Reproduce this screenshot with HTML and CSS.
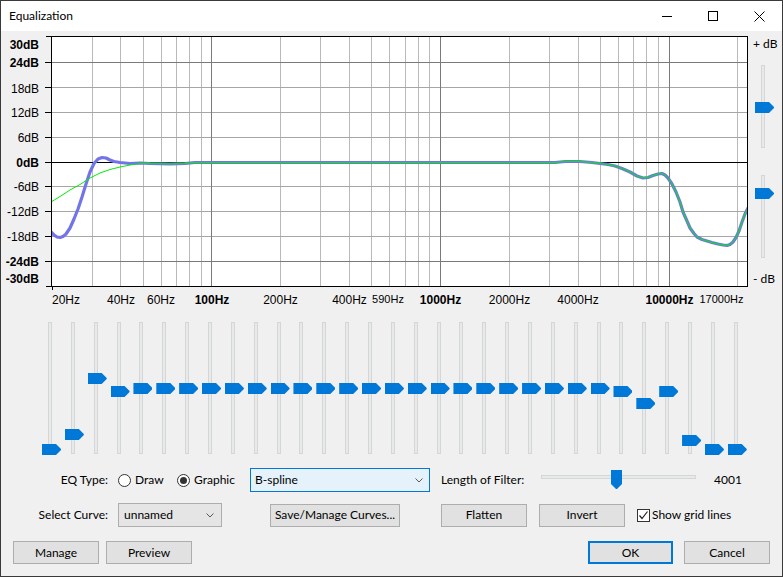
FILE: index.html
```html
<!DOCTYPE html>
<html>
<head>
<meta charset="utf-8">
<title>Equalization</title>
<link rel="stylesheet" href="styles.css">
</head>
<body>
<div class="window">
  <div class="titlebar">
    <span class="title">Equalization</span>
    <div class="caps">
      <span class="cap"><svg width="10" height="10" viewBox="0 0 10 10"><path d="M0 5.5H10" stroke="#000" stroke-width="1"/></svg></span>
      <span class="cap"><svg width="10" height="10" viewBox="0 0 10 10"><rect x="0.5" y="0.5" width="9" height="9" fill="none" stroke="#000" stroke-width="1"/></svg></span>
      <span class="cap"><svg width="11" height="11" viewBox="0 0 11 11"><path d="M0.5 0.5L10.5 10.5M10.5 0.5L0.5 10.5" stroke="#000" stroke-width="1"/></svg></span>
    </div>
  </div>

  <div class="graph-row">
    <svg class="graph" viewBox="1 31 748 282" width="748" height="282">
      <defs>
        <clipPath id="plot"><rect x="52" y="37" width="695" height="249"/></clipPath>
      </defs>
      <rect x="51.5" y="36.5" width="696" height="250" fill="#fff"/>
      <path stroke="#b9b9b9" stroke-width="1" fill="none" d="M92.5 37V286M120.5 37V286M143.5 37V286M161.5 37V286M176.5 37V286M189.5 37V286M201.5 37V286M280.5 37V286M320.5 37V286M349.5 37V286M371.5 37V286M389.5 37V286M405.5 37V286M418.5 37V286M429.5 37V286M509.5 37V286M549.5 37V286M578.5 37V286M600.5 37V286M618.5 37V286M633.5 37V286M646.5 37V286M658.5 37V286M737.5 37V286"/>
      <path stroke="#a6a6a6" stroke-width="1" fill="none" d="M52 87.5H747M52 112.5H747M52 137.5H747M52 186.5H747M52 211.5H747M52 236.5H747"/>
      <path stroke="#7a7a7a" stroke-width="1" fill="none" d="M211.5 37V286M440.5 37V286M669.5 37V286M52 62.5H747M52 261.5H747"/>
      <path stroke="#000" stroke-width="1" fill="none" d="M52 162.5H747"/>
      <rect x="51.5" y="36.5" width="696" height="250" fill="none" stroke="#000" stroke-width="1"/>
      <path stroke="#000" stroke-width="1" fill="none" d="M46 36.5H51M45 62.5H51M45 87.5H51M45 112.5H51M45 137.5H51M45 162.5H51M45 186.5H51M45 211.5H51M45 236.5H51M45 261.5H51M46 286.5H51M52.5 287V290"/>
      <g class="ylab">
        <text x="39" y="49.3" class="b">30dB</text>
        <text x="39" y="67.3" class="b">24dB</text>
        <text x="39" y="92.5">18dB</text>
        <text x="39" y="116.5">12dB</text>
        <text x="39" y="142">6dB</text>
        <text x="39" y="167" class="b">0dB</text>
        <text x="39" y="191">-6dB</text>
        <text x="39" y="216">-12dB</text>
        <text x="39" y="241">-18dB</text>
        <text x="39" y="265.5" class="b">-24dB</text>
        <text x="39" y="282.7" class="b">-30dB</text>
      </g>
      <g class="xlab">
        <text x="52" y="304" class="start">20Hz</text>
        <text x="121" y="304">40Hz</text>
        <text x="161" y="304">60Hz</text>
        <text x="212" y="304" class="b">100Hz</text>
        <text x="280.5" y="304">200Hz</text>
        <text x="349.5" y="304">400Hz</text>
        <text x="388" y="303" class="s">590Hz</text>
        <text x="440.5" y="304" class="b">1000Hz</text>
        <text x="509.5" y="304">2000Hz</text>
        <text x="578" y="304">4000Hz</text>
        <text x="669.5" y="304" class="b">10000Hz</text>
        <text x="721.5" y="303" class="s">17000Hz</text>
      </g>
      <g clip-path="url(#plot)" fill="none" stroke-linejoin="round" stroke-linecap="round">
        <polyline stroke="#7474ea" stroke-width="3.2" points="51,232 54,235 57,237 60,237.5 63,236.5 66,234 70,228 74,219 78,209 82,197 86,184 90,172 94,163.5 98,159 102,157.5 106,158 110,160 114,161.5 120,162.5 130,163.5 140,163 150,163.5 170,164 185,163.5 195,162.5 555,162.5 565,161.5 580,161.5 592,162.5 600,163.5 608,164.5 615,166 622,168.5 630,172 637,176 643,178 648,177.5 653,175.5 658,174 662,173.5 665,175 668,178 672,184 676,192 680,202 683,212 687,221 690,228 694,233.5 697,237 702,239.5 707,241 712,242.5 718,244 723,245 727,245.5 730,244.5 733,242 736,237.5 739,231 742,222 745,214 748,208"/>
        <polyline stroke="#00ee00" stroke-width="1" points="51,202 60,196.5 70,190 80,184.5 90,178 100,173 110,169.5 120,167 130,165 140,163.5 150,163.5 170,164 185,163.5 195,162.5 555,162.5 565,161.5 580,161.5 592,162.5 600,163.5 608,164.5 615,166 622,168.5 630,172 637,176 643,178 648,177.5 653,175.5 658,174 662,173.5 665,175 668,178 672,184 676,192 680,202 683,212 687,221 690,228 694,233.5 697,237 702,239.5 707,241 712,242.5 718,244 723,245 727,245.5 730,244.5 733,242 736,237.5 739,231 742,222 745,214 748,208"/>
      </g>
    </svg>
    <div class="gain">
      <span class="gain-label">+ dB</span>
      <div class="vtrack one"><span class="vthumb top1"></span></div>
      <div class="vtrack two"><span class="vthumb top2"></span></div>
      <span class="gain-label bottom">- dB</span>
    </div>
  </div>

  <div class="bands">
    <div class="band"><div class="track"></div><span class="thumb" style="top:122px"></span></div>
    <div class="band"><div class="track"></div><span class="thumb" style="top:107px"></span></div>
    <div class="band"><div class="track"></div><span class="thumb" style="top:51px"></span></div>
    <div class="band"><div class="track"></div><span class="thumb" style="top:64px"></span></div>
    <div class="band"><div class="track"></div><span class="thumb" style="top:61px"></span></div>
    <div class="band"><div class="track"></div><span class="thumb" style="top:61px"></span></div>
    <div class="band"><div class="track"></div><span class="thumb" style="top:61px"></span></div>
    <div class="band"><div class="track"></div><span class="thumb" style="top:61px"></span></div>
    <div class="band"><div class="track"></div><span class="thumb" style="top:61px"></span></div>
    <div class="band"><div class="track"></div><span class="thumb" style="top:61px"></span></div>
    <div class="band"><div class="track"></div><span class="thumb" style="top:61px"></span></div>
    <div class="band"><div class="track"></div><span class="thumb" style="top:61px"></span></div>
    <div class="band"><div class="track"></div><span class="thumb" style="top:61px"></span></div>
    <div class="band"><div class="track"></div><span class="thumb" style="top:61px"></span></div>
    <div class="band"><div class="track"></div><span class="thumb" style="top:61px"></span></div>
    <div class="band"><div class="track"></div><span class="thumb" style="top:61px"></span></div>
    <div class="band"><div class="track"></div><span class="thumb" style="top:61px"></span></div>
    <div class="band"><div class="track"></div><span class="thumb" style="top:61px"></span></div>
    <div class="band"><div class="track"></div><span class="thumb" style="top:61px"></span></div>
    <div class="band"><div class="track"></div><span class="thumb" style="top:61px"></span></div>
    <div class="band"><div class="track"></div><span class="thumb" style="top:61px"></span></div>
    <div class="band"><div class="track"></div><span class="thumb" style="top:61px"></span></div>
    <div class="band"><div class="track"></div><span class="thumb" style="top:61px"></span></div>
    <div class="band"><div class="track"></div><span class="thumb" style="top:61px"></span></div>
    <div class="band"><div class="track"></div><span class="thumb" style="top:61px"></span></div>
    <div class="band"><div class="track"></div><span class="thumb" style="top:64px"></span></div>
    <div class="band"><div class="track"></div><span class="thumb" style="top:76px"></span></div>
    <div class="band"><div class="track"></div><span class="thumb" style="top:64px"></span></div>
    <div class="band"><div class="track"></div><span class="thumb" style="top:113px"></span></div>
    <div class="band"><div class="track"></div><span class="thumb" style="top:122px"></span></div>
    <div class="band"><div class="track"></div><span class="thumb" style="top:122px"></span></div>
  </div>

  <div class="row row1">
    <span class="lbl">EQ Type:</span>
    <span class="opt opt-draw"><span class="radio"></span><span class="opt-text">Draw</span></span>
    <span class="opt opt-graphic"><span class="radio on"></span><span class="opt-text">Graphic</span></span>
    <span class="combo focus wide"><span class="combo-text">B-spline</span><svg class="chev" width="8" height="5" viewBox="0 0 8 5"><polyline points="0.5,0.5 4,4 7.5,0.5" fill="none" stroke="#5a5a5a" stroke-width="1"/></svg></span>
    <span class="lfl">Length of Filter:</span>
    <span class="hslider"><span class="htrack"></span><span class="hthumb"></span></span>
    <span class="value">4001</span>
  </div>

  <div class="row row2">
    <span class="lbl">Select Curve:</span>
    <span class="combo narrow"><span class="combo-text">unnamed</span><svg class="chev" width="8" height="5" viewBox="0 0 8 5"><polyline points="0.5,0.5 4,4 7.5,0.5" fill="none" stroke="#5a5a5a" stroke-width="1"/></svg></span>
    <button class="btn save">Save/Manage Curves...</button>
    <button class="btn flatten">Flatten</button>
    <button class="btn invert">Invert</button>
    <span class="check"><svg width="11" height="11" viewBox="0 0 11 11"><polyline points="1.5,5.5 4,8.5 9.5,1.5" fill="none" stroke="#222" stroke-width="1.2"/></svg></span>
    <span class="check-text">Show grid lines</span>
  </div>

  <div class="row row3">
    <button class="btn manage">Manage</button>
    <button class="btn preview">Preview</button>
    <button class="btn ok">OK</button>
    <button class="btn cancel">Cancel</button>
  </div>
</div>
</body>
</html>
```

FILE: styles.css
```css
* { box-sizing: border-box; }
html, body { margin: 0; padding: 0; }
body {
  width: 783px;
  height: 577px;
  overflow: hidden;
  background: #f0f0f0;
  font-family: Lato, "Noto Sans", sans-serif;
  font-size: 12px;
  color: #000;
}
.window {
  width: 783px;
  height: 577px;
  border: 1px solid #3a3a3a;
  background: #f0f0f0;
  display: flex;
  flex-direction: column;
}
.titlebar {
  flex: none;
  height: 30px;
  background: #fff;
  display: flex;
  align-items: center;
}
.title { flex: 1; padding-left: 8px; line-height: 16px; }
.caps { display: flex; height: 30px; }
.cap {
  width: 46px;
  height: 30px;
  display: flex;
  align-items: center;
  justify-content: center;
}
.cap svg { display: block; }

.graph-row { flex: none; display: flex; height: 282px; }
.graph { display: block; width: 748px; height: 282px; flex: none; }
.graph text { font-family: "Liberation Sans", Arial, sans-serif; font-size: 12px; fill: #000; }
.graph .b { font-weight: bold; }
.ylab text { text-anchor: end; }
.xlab text { text-anchor: middle; }
.xlab text.start { text-anchor: start; }
.xlab text.s { font-size: 11px; }

.gain { width: 33px; flex: none; display: flex; flex-direction: column; padding-top: 7px; }
.gain-label { line-height: 12px; padding-left: 4px; white-space: nowrap; }
.gain-label.bottom { margin-top: 15px; }
.vtrack {
  position: relative;
  width: 4px;
  height: 83px;
  margin-left: 12px;
  background: #e7eaea;
  border: 1px solid #d6d6d6;
}
.vtrack.one { margin-top: 15px; }
.vtrack.two { margin-top: 27px; }
.vthumb, .thumb {
  position: absolute;
  width: 19px;
  height: 11px;
  background: #0078d7;
  clip-path: polygon(0 0, 14px 0, 19px 5px, 19px 6px, 14px 11px, 0 11px);
}
.vthumb { left: -7px; }
.vthumb.top1 { top: 36px; }
.vthumb.top2 { top: 12px; }

.bands {
  flex: none;
  display: grid;
  grid-template-columns: repeat(31, 22.867px);
  margin-left: 37.567px;
  margin-top: 9px;
  height: 132px;
}
.band { position: relative; height: 132px; }
.track {
  width: 4px;
  height: 132px;
  margin-left: 9.43px;
  background: #e7eaea;
  border: 1px solid #d6d6d6;
}
.thumb { left: 3.43px; }

.row { flex: none; display: flex; align-items: center; }
.row1 { margin-top: 14px; height: 24px; }
.row2 { margin-top: 11px; height: 24px; }
.row3 { margin-top: 14px; height: 23px; padding-right: 12px; }
.lbl { width: 107px; text-align: right; line-height: 16px; }

.opt { display: flex; align-items: center; }
.opt-draw { width: 59px; margin-left: 10px; }
.opt-graphic { width: 73px; }
.opt-text { margin-left: 4px; line-height: 16px; }
.radio {
  position: relative;
  flex: none;
  width: 13px;
  height: 13px;
  border: 1px solid #333;
  border-radius: 50%;
  background: #fff;
}
.radio.on::after {
  content: "";
  position: absolute;
  left: 2px;
  top: 2px;
  width: 7px;
  height: 7px;
  border-radius: 50%;
  background: #333;
}

.combo {
  position: relative;
  display: flex;
  align-items: center;
  height: 24px;
  border: 1px solid #adadad;
  background: #e5e5e5;
  padding-left: 4px;
}
.combo.focus { border-color: #0078d7; background: #e5f1fb; }
.combo.wide { width: 180px; }
.combo.narrow { width: 104px; margin-left: 10px; padding-left: 5px; }
.combo-text { line-height: 16px; }
.chev { position: absolute; top: 9px; display: block; }
.combo.wide .chev { right: 6px; }
.combo.narrow .chev { right: 7px; }

.lfl { width: 100px; margin-left: 11px; line-height: 16px; white-space: nowrap; }
.hslider { position: relative; width: 155px; height: 24px; }
.htrack {
  position: absolute;
  left: 0;
  top: 7px;
  width: 155px;
  height: 4px;
  background: #e7eaea;
  border: 1px solid #d6d6d6;
}
.hthumb {
  position: absolute;
  left: 70px;
  top: 2px;
  width: 11px;
  height: 19px;
  background: #0078d7;
  clip-path: polygon(0 0, 11px 0, 11px 14px, 6px 19px, 5px 19px, 0 14px);
}
.value { margin-left: 18px; line-height: 16px; }

.btn {
  height: 23px;
  padding: 0;
  border: 1px solid #adadad;
  background: #e1e1e1;
  font-family: inherit;
  font-size: 12px;
  color: #000;
  display: flex;
  align-items: center;
  justify-content: center;
  line-height: 16px;
}
.save { width: 130px; margin-left: 48px; }
.flatten { width: 86px; margin-left: 41px; }
.invert { width: 86px; margin-left: 12px; }
.check {
  flex: none;
  width: 13px;
  height: 13px;
  margin-left: 12px;
  border: 1px solid #333;
  background: #fff;
  display: flex;
  align-items: center;
  justify-content: center;
}
.check svg { display: block; }
.check-text { margin-left: 2px; line-height: 16px; }

.manage { width: 86px; margin-left: 12px; }
.preview { width: 86px; margin-left: 7px; }
.ok { width: 85px; margin-left: auto; border: 2px solid #0078d7; }
.cancel { width: 86px; margin-left: 11px; }
```
